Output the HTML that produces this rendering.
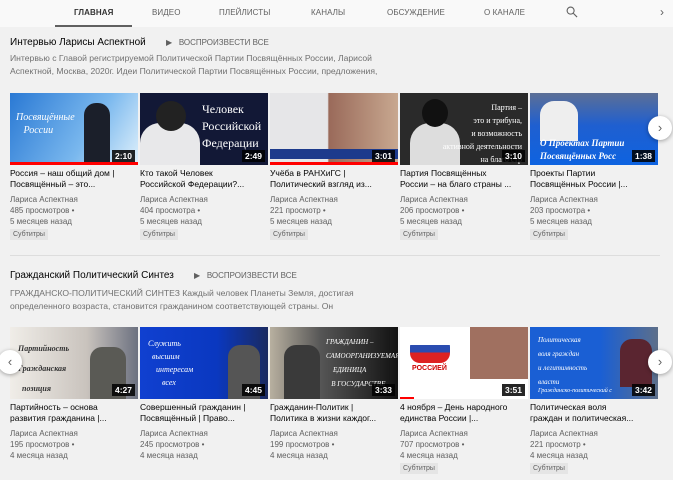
<!DOCTYPE html>
<html><head><meta charset="utf-8"><style>
*{margin:0;padding:0;box-sizing:border-box}
body{width:673px;height:480px;overflow:hidden;background:#f1f1f1;font-family:"Liberation Sans",sans-serif;position:relative}
.nav{position:absolute;left:0;top:0;width:673px;height:27px;background:#f9f9f9}
.tab{position:absolute;top:8px;font-size:8px;color:#606060;letter-spacing:0.1px}
.ul{position:absolute;left:55px;top:25px;width:77px;height:2px;background:#606060}
.a{position:absolute;white-space:nowrap}
.st{font-size:10px;color:#030303}
.pa{font-size:8px;color:#606060}
.desc{font-size:8.6px;color:#707070;line-height:13px}
.th{position:absolute;width:128px;height:72px;overflow:hidden}
.dur{position:absolute;right:3px;bottom:3px;background:rgba(0,0,0,.85);color:#fff;font-size:8.5px;font-weight:bold;padding:1px 3px}
.red{position:absolute;left:0;bottom:0;height:3px;background:#f00}
.vt{position:absolute;font-size:8.5px;color:#030303;line-height:11px;width:128px;white-space:nowrap}
.m{position:absolute;font-size:8px;color:#606060;line-height:11px}
.b{position:absolute;font-size:7px;color:#606060;background:#e5e5e5;padding:2px 3px}
.circ{position:absolute;width:24px;height:24px;border-radius:50%;background:#fff;box-shadow:0 1px 4px rgba(0,0,0,.35);color:#606060;font-size:13px;text-align:center;line-height:23px}
.ttx{position:absolute;font-family:"Liberation Serif",serif;font-style:italic;color:#fff;font-size:11px;line-height:13px;white-space:nowrap}
.hr{position:absolute;left:10px;top:255px;width:650px;height:1px;background:#ddd}
</style></head><body>
<div class="nav">
<span class="tab" style="left:74px;font-weight:bold;color:#333">ГЛАВНАЯ</span>
<span class="tab" style="left:152px">ВИДЕО</span>
<span class="tab" style="left:219px">ПЛЕЙЛИСТЫ</span>
<span class="tab" style="left:311px">КАНАЛЫ</span>
<span class="tab" style="left:387px">ОБСУЖДЕНИЕ</span>
<span class="tab" style="left:484px">О КАНАЛЕ</span>
<svg style="position:absolute;left:566px;top:6px" width="12" height="12" viewBox="0 0 13 13"><circle cx="5" cy="5" r="3.8" fill="none" stroke="#606060" stroke-width="1.2"/><path d="M8 8L12 12" stroke="#606060" stroke-width="1.2"/></svg>
<span class="tab" style="left:660px;font-size:12px;top:5px">›</span>
<div class="ul"></div>
</div>

<div class="a st" style="left:10px;top:37px">Интервью Ларисы Аспектной</div>
<div class="a pa" style="left:166px;top:38px">▶&nbsp;&nbsp;&nbsp;ВОСПРОИЗВЕСТИ ВСЕ</div>
<div class="a desc" style="left:10px;top:52px">Интервью с Главой регистрируемой Политической Партии Посвящённых России, Ларисой<br>Аспектной, Москва, 2020г. Идеи Политической Партии Посвящённых России, предложения,</div>

<!-- row 1 -->
<div class="th" style="left:10px;top:93px;background:linear-gradient(120deg,#2a79d4,#7ab8ee 60%,#dff0fb)"><div class="ttx" style="left:6px;top:18px;font-size:10px">Посвящённые<br>&nbsp;&nbsp;&nbsp;России</div><div style="position:absolute;left:74px;top:10px;width:26px;height:60px;background:#1b1f2a;border-radius:12px 12px 0 0"></div><div class="dur">2:10</div><div class="red" style="width:128px"></div></div>
<div class="th" style="left:140px;top:93px;background:#121836"><div style="position:absolute;left:0;top:30px;width:60px;height:42px;background:#e8e8ea;border-radius:20px 20px 0 0"></div><div style="position:absolute;left:16px;top:8px;width:30px;height:30px;background:#222;border-radius:50%"></div><div class="ttx" style="left:62px;top:8px;font-size:12px;line-height:17px;font-style:normal">Человек<br>Российской<br>Федерации</div><div class="dur">2:49</div></div>
<div class="th" style="left:270px;top:93px;background:linear-gradient(90deg,#e6e6e8 45%,#9a6a5a 46%,#c8a890)"><div style="position:absolute;left:0;top:56px;width:128px;height:10px;background:#1d3a8c"></div><div class="dur">3:01</div><div class="red" style="width:128px"></div></div>
<div class="th" style="left:400px;top:93px;background:#2a2a2a"><div style="position:absolute;left:10px;top:30px;width:50px;height:42px;background:#ddd;border-radius:20px 20px 0 0"></div><div style="position:absolute;left:22px;top:6px;width:26px;height:28px;background:#111;border-radius:50%"></div><div class="ttx" style="right:6px;top:8px;font-size:8px;text-align:right;font-style:normal">Партия –<br>это и трибуна,<br>и возможность<br>активной деятельности<br>на благо стр</div><div class="dur">3:10</div></div>
<div class="th" style="left:530px;top:93px;background:linear-gradient(180deg,#5c6f96 0,#1f5fd0 45%,#0e63e0)"><div style="position:absolute;left:10px;top:8px;width:38px;height:40px;background:#eee;border-radius:14px 14px 0 0"></div><div class="ttx" style="left:10px;top:44px;font-weight:bold;font-size:9px">О Проектах Партии<br>Посвящённых Росс</div><div class="dur">1:38</div></div>
<div class="circ" style="left:648px;top:116px">›</div>

<div class="vt" style="left:10px;top:168px">Россия – наш общий дом |<br>Посвящённый – это...</div>
<div class="vt" style="left:140px;top:168px">Кто такой Человек<br>Российской Федерации?...</div>
<div class="vt" style="left:270px;top:168px">Учёба в РАНХиГС |<br>Политический взгляд из...</div>
<div class="vt" style="left:400px;top:168px">Партия Посвящённых<br>России – на благо страны ...</div>
<div class="vt" style="left:530px;top:168px">Проекты Партии<br>Посвящённых России |...</div>

<div class="m" style="left:10px;top:194px">Лариса Аспектная<br>485 просмотров •<br>5 месяцев назад</div>
<div class="m" style="left:140px;top:194px">Лариса Аспектная<br>404 просмотра •<br>5 месяцев назад</div>
<div class="m" style="left:270px;top:194px">Лариса Аспектная<br>221 просмотр •<br>5 месяцев назад</div>
<div class="m" style="left:400px;top:194px">Лариса Аспектная<br>206 просмотров •<br>5 месяцев назад</div>
<div class="m" style="left:530px;top:194px">Лариса Аспектная<br>203 просмотра •<br>5 месяцев назад</div>
<div class="b" style="left:10px;top:229px">Субтитры</div>
<div class="b" style="left:140px;top:229px">Субтитры</div>
<div class="b" style="left:270px;top:229px">Субтитры</div>
<div class="b" style="left:400px;top:229px">Субтитры</div>
<div class="b" style="left:530px;top:229px">Субтитры</div>

<div class="hr"></div>

<div class="a st" style="left:10px;top:270px">Гражданский Политический Синтез</div>
<div class="a pa" style="left:194px;top:271px">▶&nbsp;&nbsp;&nbsp;ВОСПРОИЗВЕСТИ ВСЕ</div>
<div class="a desc" style="left:10px;top:287px">ГРАЖДАНСКО-ПОЛИТИЧЕСКИЙ СИНТЕЗ Каждый человек Планеты Земля, достигая<br>определенного возраста, становится гражданином соответствующей страны. Он</div>

<!-- row 2 -->
<div class="th" style="left:10px;top:327px;background:linear-gradient(90deg,#f0ede8,#c9c3bd 60%,#6c7180)"><div class="ttx" style="left:8px;top:12px;color:#333;font-size:8px;line-height:20px;font-weight:bold">Партийность<br>Гражданская<br>&nbsp;&nbsp;позиция</div><div style="position:absolute;left:80px;top:20px;width:36px;height:52px;background:#5a5a55;border-radius:12px 12px 0 0"></div><div class="dur">4:27</div></div>
<div class="th" style="left:140px;top:327px;background:linear-gradient(90deg,#1040d0,#0a38c0 60%,#1a2a60)"><div class="ttx" style="left:8px;top:10px;font-size:8px;line-height:13px">Служить<br>&nbsp;&nbsp;высшим<br>&nbsp;&nbsp;&nbsp;&nbsp;интересам<br>&nbsp;&nbsp;&nbsp;&nbsp;&nbsp;&nbsp;&nbsp;всех</div><div style="position:absolute;left:88px;top:18px;width:32px;height:54px;background:#555;border-radius:12px 12px 0 0"></div><div class="dur">4:45</div></div>
<div class="th" style="left:270px;top:327px;background:linear-gradient(90deg,#b8b0a0,#555 40%,#111)"><div style="position:absolute;left:14px;top:18px;width:36px;height:54px;background:#3a3a3a;border-radius:12px 12px 0 0"></div><div class="ttx" style="left:56px;top:8px;font-size:7px;line-height:14px">ГРАЖДАНИН –<br>САМООРГАНИЗУЕМАЯ<br>&nbsp;&nbsp;&nbsp;&nbsp;ЕДИНИЦА<br>&nbsp;&nbsp;&nbsp;В ГОСУДАРСТВЕ</div><div class="dur">3:33</div></div>
<div class="th" style="left:400px;top:327px;background:#fff"><div style="position:absolute;left:70px;top:0;width:58px;height:52px;background:#a07060"></div><div style="position:absolute;left:10px;top:10px;width:40px;height:26px;background:linear-gradient(180deg,#fff 30%,#2a4cb0 30%,#2a4cb0 60%,#d22 60%);border-radius:10px"></div><div style="position:absolute;left:12px;top:38px;color:#c00;font-size:7px;font-weight:bold">РОССИЕЙ</div><div class="dur">3:51</div><div class="red" style="width:14px;height:2px"></div></div>
<div class="th" style="left:530px;top:327px;background:linear-gradient(90deg,#1a5fd4 55%,#5d6f8a)"><div class="ttx" style="left:8px;top:6px;font-size:7px;line-height:14px">Политическая<br>воля граждан<br>и легитимность<br>власти</div><div style="position:absolute;left:90px;top:12px;width:32px;height:48px;background:#5a2530;border-radius:12px 12px 0 0"></div><div class="ttx" style="left:8px;top:58px;font-size:6px">Гражданско-политический с</div><div class="dur">3:42</div></div>
<div class="circ" style="left:-2px;top:350px">‹</div>
<div class="circ" style="left:648px;top:350px">›</div>

<div class="vt" style="left:10px;top:402px">Партийность – основа<br>развития гражданина |...</div>
<div class="vt" style="left:140px;top:402px">Совершенный гражданин |<br>Посвящённый | Право...</div>
<div class="vt" style="left:270px;top:402px">Гражданин-Политик |<br>Политика в жизни каждог...</div>
<div class="vt" style="left:400px;top:402px">4 ноября – День народного<br>единства России |...</div>
<div class="vt" style="left:530px;top:402px">Политическая воля<br>граждан и политическая...</div>

<div class="m" style="left:10px;top:428px">Лариса Аспектная<br>195 просмотров •<br>4 месяца назад</div>
<div class="m" style="left:140px;top:428px">Лариса Аспектная<br>245 просмотров •<br>4 месяца назад</div>
<div class="m" style="left:270px;top:428px">Лариса Аспектная<br>199 просмотров •<br>4 месяца назад</div>
<div class="m" style="left:400px;top:428px">Лариса Аспектная<br>707 просмотров •<br>4 месяца назад</div>
<div class="m" style="left:530px;top:428px">Лариса Аспектная<br>221 просмотр •<br>4 месяца назад</div>
<div class="b" style="left:400px;top:463px">Субтитры</div>
<div class="b" style="left:530px;top:463px">Субтитры</div>
</body></html>
